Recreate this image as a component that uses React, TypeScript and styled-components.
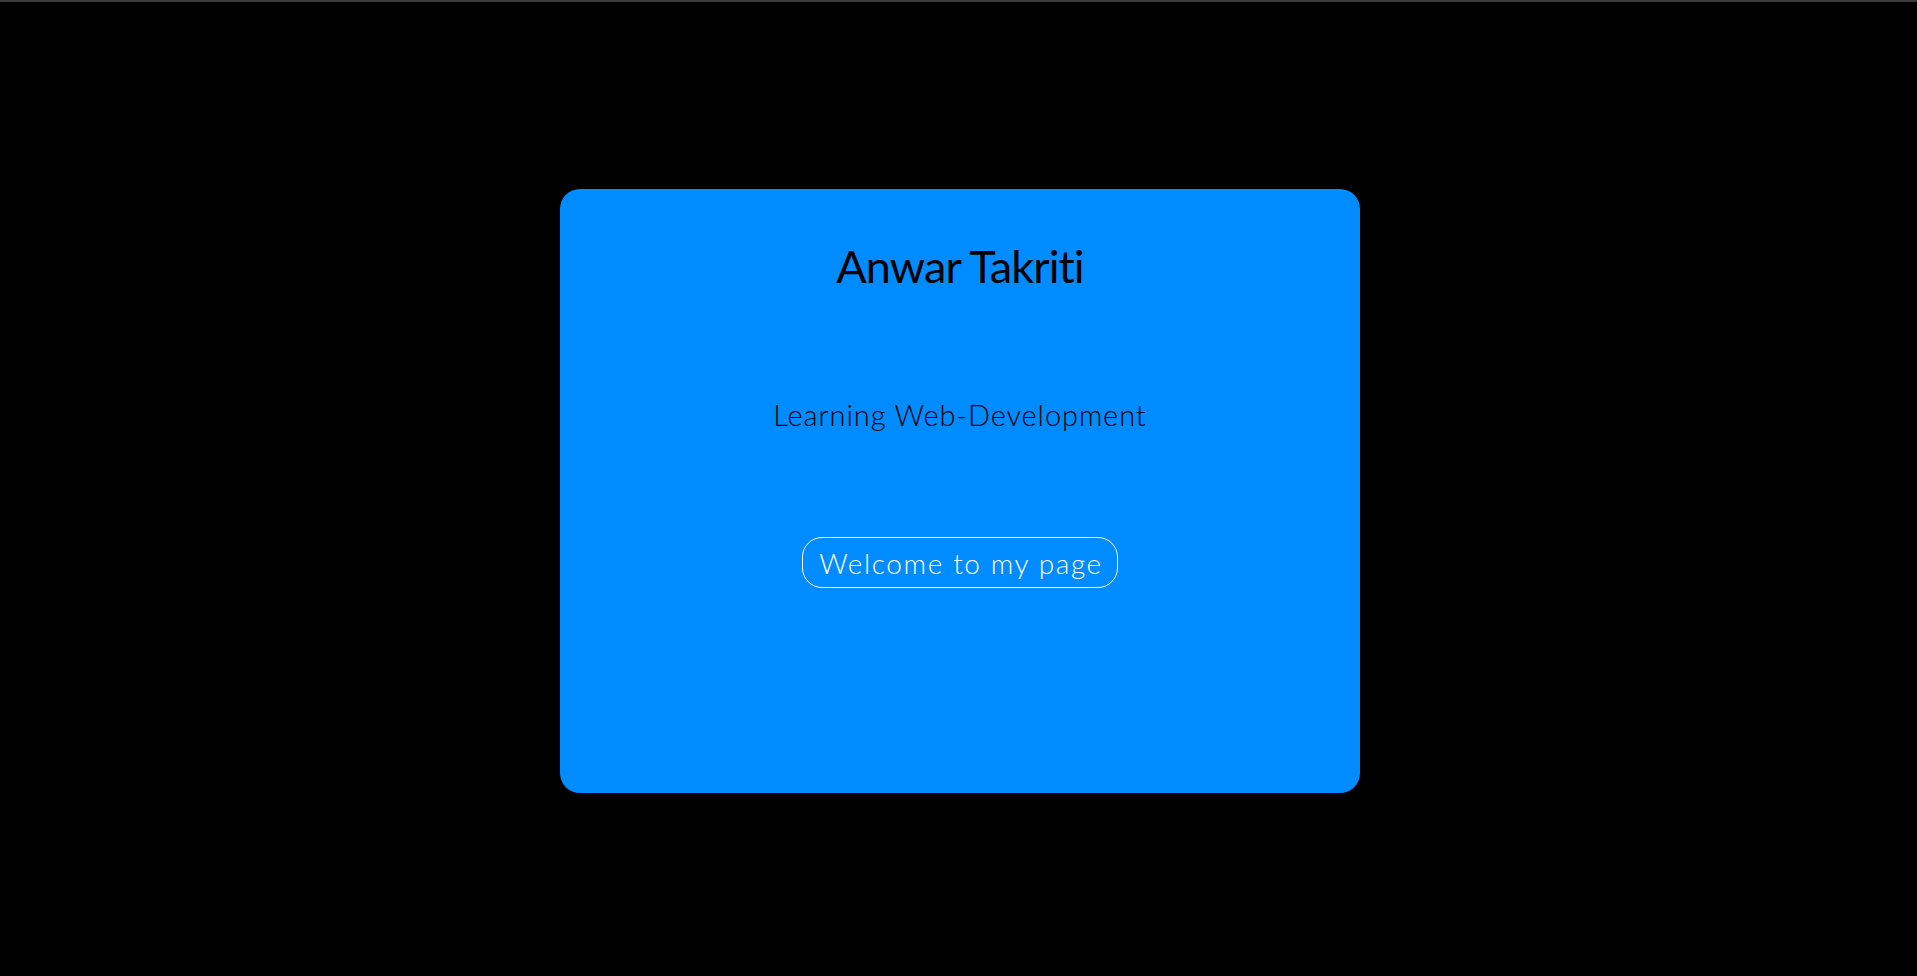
import React from "react";
import styled, { createGlobalStyle } from "styled-components";

const GlobalStyle = createGlobalStyle`
  html, body {
    margin: 0;
    padding: 0;
    background: #000;
    overflow: hidden;
  }
  body {
    font-family: Lato, "Open Sans", sans-serif;
  }
`;

const Page = styled.div`
  height: 976px;
  box-sizing: border-box;
  border-top: 2px solid #3c3c3c;
  background: #000;
  display: flex;
  flex-direction: column;
  align-items: center;
  padding-top: 187px;
  padding-left: 3px;
`;

const Card = styled.section`
  width: 800px;
  height: 604px;
  box-sizing: border-box;
  background: #008bff;
  border-radius: 20px;
  display: flex;
  flex-direction: column;
  align-items: center;
  padding-top: 55px;
`;

const Title = styled.h1`
  margin: 0;
  font-family: Lato, sans-serif;
  font-weight: 400;
  font-size: 45px;
  line-height: 1;
  color: #000;
  letter-spacing: -0.9px;
`;

const Subtitle = styled.p`
  margin: 111px 0 0;
  font-family: Lato, sans-serif;
  font-weight: 300;
  font-size: 29px;
  line-height: 1;
  color: #000;
  letter-spacing: 0.9px;
`;

const WelcomeButton = styled.button`
  margin-top: 108px;
  font-family: Lato, sans-serif;
  font-weight: 300;
  font-size: 28px;
  line-height: 1;
  color: #fff;
  background: transparent;
  border: 1px solid #fff;
  border-radius: 20px;
  padding: 10.5px 14px 10.5px 16px;
  letter-spacing: 1.6px;
  cursor: pointer;
`;

export default function App() {
  return (
    <>
      <GlobalStyle />
      <Page>
        <Card>
          <Title>Anwar Takriti</Title>
          <Subtitle>Learning Web-Development</Subtitle>
          <WelcomeButton>Welcome to my page</WelcomeButton>
        </Card>
      </Page>
    </>
  );
}
